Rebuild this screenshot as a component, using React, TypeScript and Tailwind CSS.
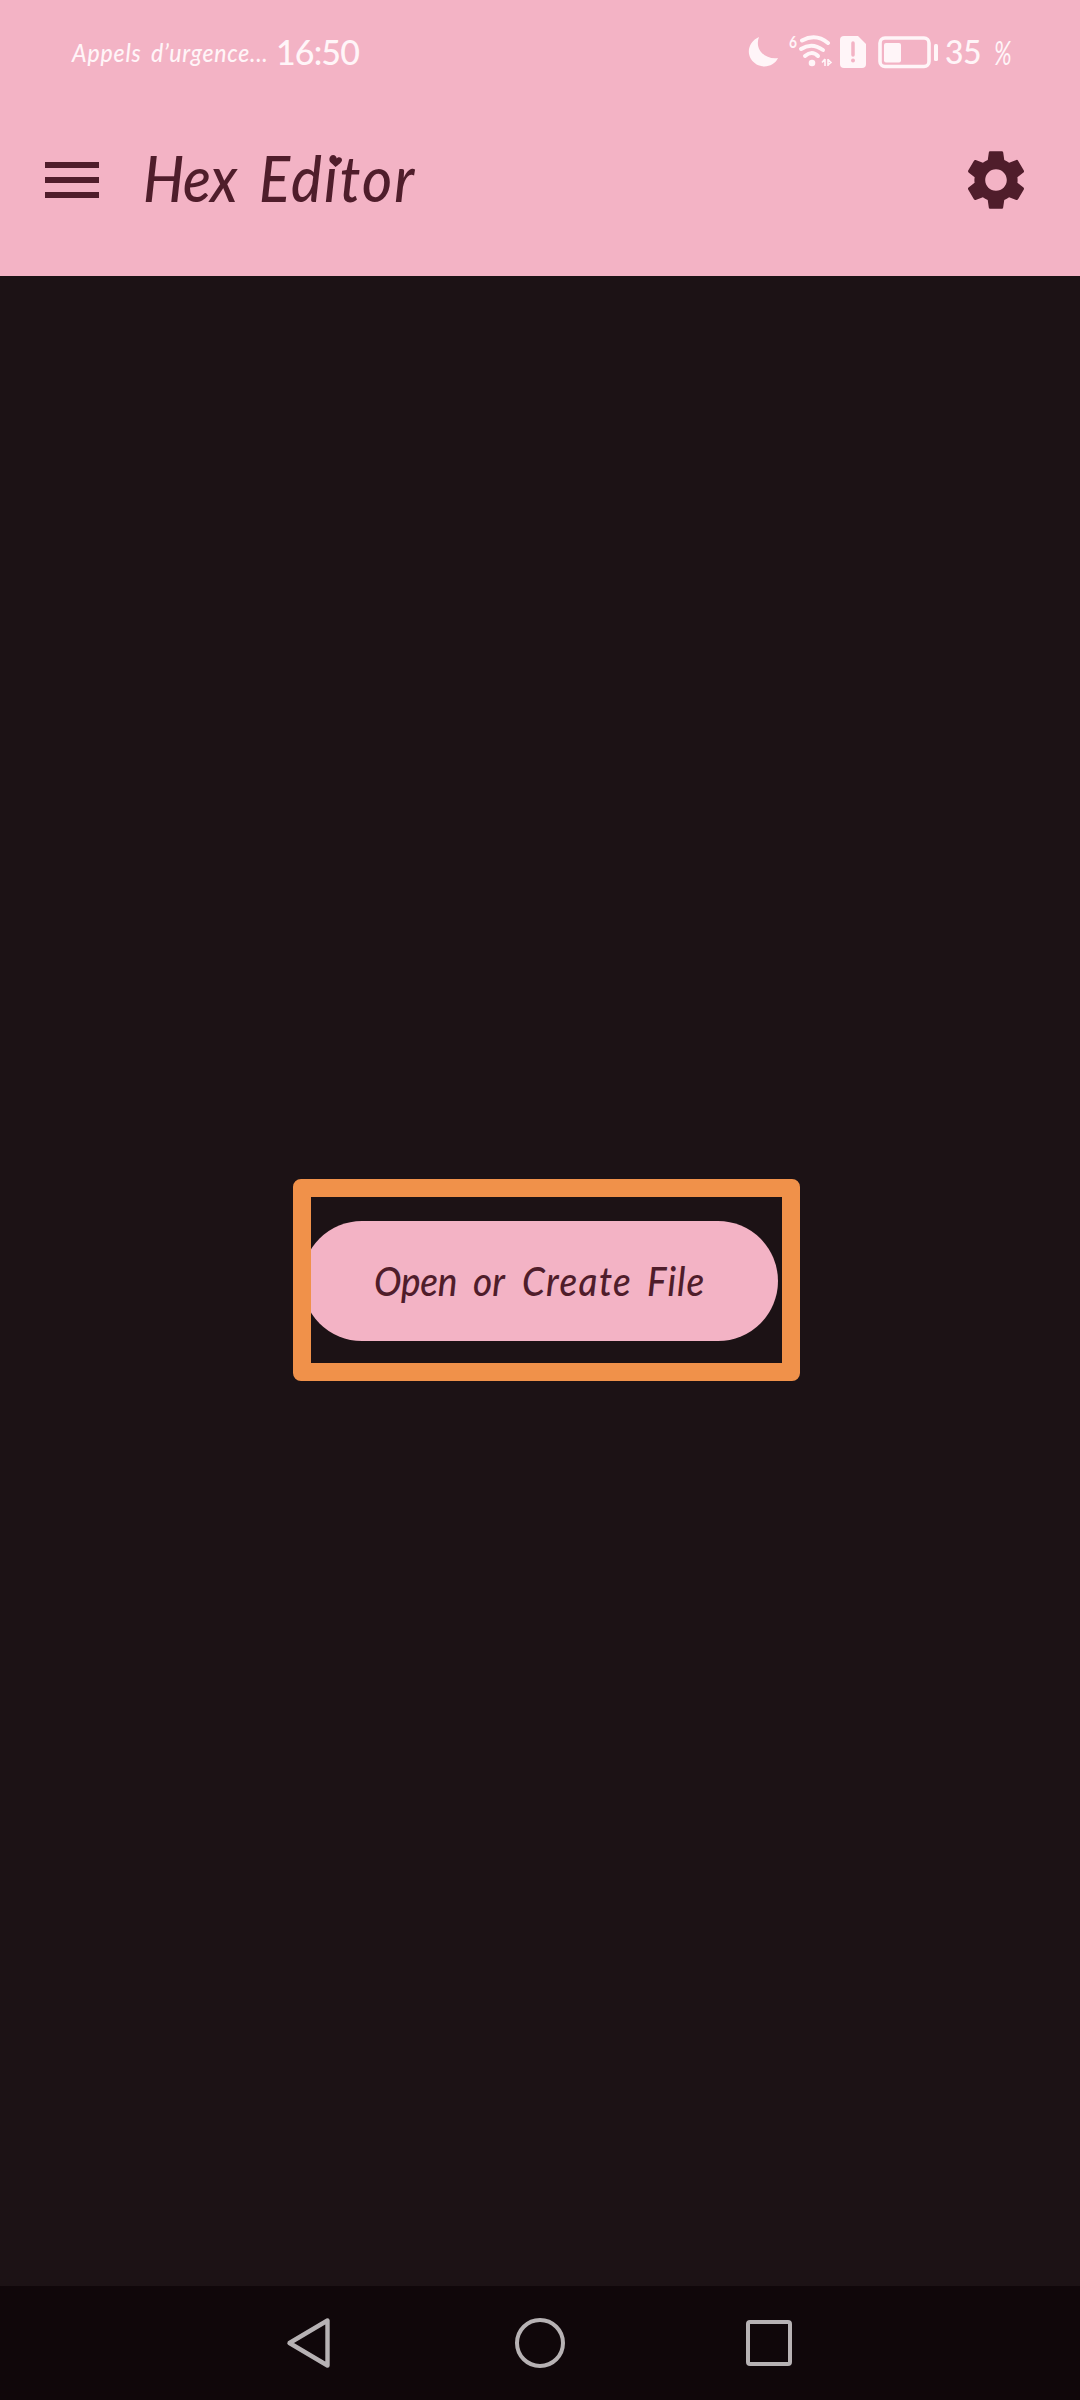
import { MdSettings } from "react-icons/md";

function Word({ children, className }: { children: string; className: string }) {
  return (
    <span className={"block shrink-0 whitespace-nowrap " + className}>
      <span className="block w-max origin-left scale-x-[0.92]">{children}</span>
    </span>
  );
}

function StatusBar() {
  return (
    <div className="flex h-[104px] items-center pl-[72px] font-medium text-[#fff5f8]">
      <div className="flex w-[204px] text-[25px] leading-[30px] italic">
        <Word className="w-[79px] tracking-[0.9px]">Appels</Word>
        <Word className="w-[120px] tracking-[0.8px]">d’urgence...</Word>
      </div>
      <span className="w-[471px] text-[34px] leading-10 tracking-[-0.9px]">16:50</span>
      <svg className="h-[40px] w-[191px] shrink-0" viewBox="747 32 191 40" fill="none">
        <path d="M759 37C750 41 746 51 751 59C757 69 773 69 778 58C766 60 754 50 759 37Z" fill="currentColor" />
        <text x="789" y="47.5" fontSize="17" fontWeight="700" fill="currentColor" textLength="8" lengthAdjust="spacingAndGlyphs">6</text>
        <g stroke="currentColor" strokeWidth="4" strokeLinecap="round">
          <path d="M802 40.500Q816 33 828 43" />
          <path d="M801 49Q812 42 823 50" />
          <path d="M805 56Q812 50 818 56" />
        </g>
        <circle cx="812" cy="63" r="3.3" fill="currentColor" />
        <path d="M825 59V66M825 59L822 62.5M828 66V59M828 59.500L831 62.5L828 65" stroke="currentColor" strokeWidth="1.6" />
        <path d="M844 36H858L866 44V64Q866 68 862 68H844Q840 68 840 64V40Q840 36 844 36Z" fill="currentColor" />
        <path d="M853 43V55" stroke="#f3b3c5" strokeWidth="3.5" strokeLinecap="round" />
        <circle cx="853" cy="60.5" r="2" fill="#f3b3c5" />
        <rect x="880" y="38" width="49" height="28.500" rx="5" stroke="currentColor" strokeWidth="3.6" />
        <rect x="884" y="43" width="17" height="19.500" rx="2" fill="currentColor" />
        <rect x="934" y="44" width="4" height="17" rx="1.500" fill="currentColor" />
      </svg>
      <span className="ml-[7px] w-[49px] text-[32px] leading-10 tracking-[-0.5px]">35</span>
      <span className="w-6 origin-left scale-x-[0.72] text-[33px] leading-10 font-normal italic">%</span>
    </div>
  );
}

function AppBar() {
  return (
    <div className="flex h-[152px] items-center pl-[45px] pr-12 text-[#4f1d2b]">
      <div className="flex w-[54px] flex-col gap-[9px]">
        <div className="h-1.5 bg-current" />
        <div className="h-1.5 bg-current" />
        <div className="h-1.5 bg-current" />
      </div>
      <h1 className="-mt-1 ml-[44px] flex flex-1 text-[63px] leading-[72px] font-medium italic">
        <Word className="w-[116px] tracking-[-0.5px]">Hex</Word>
        <div className="relative">
          <Word className="w-[156px] tracking-[2.3px]">Editor</Word>
          <svg className="absolute top-[15px] left-[71px] h-[10px] w-[12px]" viewBox="0 0 12 10" fill="currentColor">
            <path d="M5.500 10C2 7 0 5 0 2.800C0 .3 3.800-.8 6 2.200C8-.8 12 .2 12 3C12 5.500 8 8 5.500 10Z" />
          </svg>
        </div>
      </h1>
      <MdSettings className="size-[72px]" />
    </div>
  );
}

function OpenButton() {
  return (
    <div className="relative">
      <button className="flex h-[120px] w-[476px] items-center rounded-full bg-[#f3b3c5] pl-[72px] text-[40px] leading-[48px] font-medium text-[#4f1d2b] italic">
        <Word className="w-[99px] tracking-[-0.2px]">Open</Word>
        <Word className="w-[49px]">or</Word>
        <Word className="w-[125px] tracking-[1.5px]">Create</Word>
        <Word className="w-[60px] tracking-[1.2px]">File</Word>
      </button>
      <div className="pointer-events-none absolute -top-[42px] -left-[9px] h-[202px] w-[507px] rounded-lg border-[18px] border-[#f0914a]" />
    </div>
  );
}

function NavBar() {
  return (
    <div className="flex h-[114px] items-center bg-[#10070a] pl-[286px] text-[#b7b2b4]">
      <svg className="h-[52px] w-[46px]" viewBox="0 0 46 52" fill="none" stroke="currentColor" strokeWidth="4.400" strokeLinejoin="round">
        <path d="M41.500 3.500V48.500L3.500 26Z" />
      </svg>
      <div className="ml-[183px] size-[50px] rounded-full border-[4.500px] border-current" />
      <div className="ml-[181px] size-[46px] rounded-[4px] border-[4.500px] border-current" />
    </div>
  );
}

export default function App() {
  return (
    <div className="flex h-[2400px] w-[1080px] flex-col overflow-hidden bg-[#1c1215] font-['Lato',sans-serif]">
      <header className="h-[276px] bg-[#f3b3c5]">
        <StatusBar />
        <AppBar />
      </header>
      <main className="flex flex-1 items-center justify-center">
        <OpenButton />
      </main>
      <NavBar />
    </div>
  );
}
